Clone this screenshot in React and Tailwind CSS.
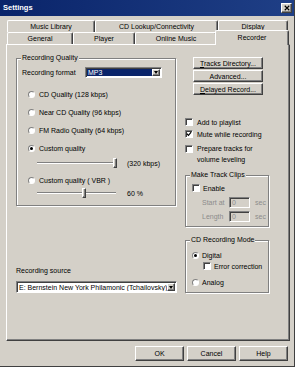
import React from "react";

const RAISED =
  "border border-t-white border-l-white border-r-[#404040] border-b-[#404040] shadow-[inset_-1px_-1px_0_#808080] bg-[#d4d0c8]";
const SUNKEN =
  "border border-t-[#808080] border-l-[#808080] border-r-white border-b-white shadow-[inset_1px_1px_0_#404040]";

function Btn({ className = "", children }) {
  return (
    <div className={`flex items-center justify-center ${RAISED} ${className}`}>
      {children}
    </div>
  );
}

function Arrow() {
  return (
    <div className={`flex h-full w-[8px] shrink-0 items-center justify-center ${RAISED}`}>
      <span className="h-0 w-0 border-l-[2.5px] border-r-[2.5px] border-t-[3px] border-l-transparent border-r-transparent border-t-black" />
    </div>
  );
}

function Radio({ checked }) {
  return (
    <span className="flex h-[7px] w-[7px] shrink-0 items-center justify-center rounded-full border border-t-[#808080] border-l-[#808080] border-r-white border-b-white bg-white">
      {checked && <span className="h-[3px] w-[3px] rounded-full bg-black" />}
    </span>
  );
}

function Check({ checked, className = "" }) {
  return (
    <span className={`flex h-[8px] w-[8px] shrink-0 items-center justify-center bg-white ${SUNKEN} ${className}`}>
      {checked && (
        <svg viewBox="0 0 7 7" className="h-[6px] w-[6px]">
          <path d="M1 3.2 L2.9 5.2 L6 1.4" stroke="black" strokeWidth="1.4" fill="none" />
        </svg>
      )}
    </span>
  );
}

function Slider({ thumb }) {
  return (
    <div className="relative h-[10px] w-[82px] shrink-0">
      <div className="absolute left-0 right-[3px] top-[4px] h-[2px] border-t border-b border-t-[#808080] border-b-white" />
      <div className={`absolute top-[0px] h-[10px] w-[4px] ${RAISED} ${thumb}`} />
    </div>
  );
}

function Group({ label, className = "", children }) {
  return (
    <div className={`flex flex-col border border-[#808080] shadow-[1px_1px_0_#fff,inset_1px_1px_0_#fff] ${className}`}>
      <span className="-mt-[5px] ml-[4px] h-[8px] self-start bg-[#d4d0c8] px-[1px] leading-[8px]">
        {label}
      </span>
      {children}
    </div>
  );
}

function Tab({ className = "", children }) {
  return (
    <div
      className={`flex items-center justify-center rounded-t-[2px] border-t border-l border-r border-t-white border-l-white border-r-[#404040] bg-[#d4d0c8] shadow-[inset_-1px_0_0_#808080] ${className}`}
    >
      {children}
    </div>
  );
}

export default function App() {
  return (
    <div className="flex h-[367px] w-[295px] flex-col overflow-hidden border-r border-b border-r-[#404040] border-b-[#404040] bg-[#d4d0c8] font-['Liberation_Sans',Arial,sans-serif] text-[7px] leading-none text-black">
      {/* title bar */}
      <div className="flex h-[16px] shrink-0 items-center justify-between bg-linear-to-r from-[#0a246a] to-[#1f3f86] pl-[3px] pr-[2px]">
        <span className="text-[7.5px] font-bold text-white">Settings</span>
        <Btn className="h-[10px] w-[11px]">
          <svg viewBox="0 0 8 8" className="h-[6px] w-[6px]">
            <path d="M1 1 L7 7 M7 1 L1 7" stroke="black" strokeWidth="1.5" />
          </svg>
        </Btn>
      </div>

      {/* tabs */}
      <div className="mt-[4px] flex shrink-0 flex-col pl-[7px]">
        <div className="flex h-[12px]">
          <Tab className="w-[88px]">Music Library</Tab>
          <Tab className="w-[123px]">CD Lookup/Connectivity</Tab>
          <Tab className="w-[70px]">Display</Tab>
        </div>
        <div className="flex h-[12px] items-end">
          <Tab className="h-[12px] w-[66px]">General</Tab>
          <Tab className="h-[12px] w-[62px]">Player</Tab>
          <Tab className="h-[12px] w-[82px]">Online Music</Tab>
          <Tab className="relative z-10 -mb-[1px] -ml-[2px] h-[15px] w-[74px] items-start pt-[3px]">
            Recorder
          </Tab>
        </div>
      </div>

      {/* panel */}
      <div className={`ml-[6px] flex h-[297px] w-[284px] shrink-0 ${RAISED}`}>
        {/* left column */}
        <div className="ml-[9px] mt-[13px] flex w-[160px] flex-col">
          <Group label="Recording Quality" className="pb-[7px]">
            <div className="mt-[5px] flex h-[11px] items-center pl-[5px]">
              <span className="w-[63px]">Recording format</span>
              <div className={`flex h-[11px] w-[77px] items-stretch bg-white ${SUNKEN} p-[1px]`}>
                <span className="flex flex-1 items-center bg-[#0a246a] pl-[1px] text-white">MP3</span>
                <Arrow />
              </div>
            </div>
            <div className="mt-[11px] flex h-[10px] items-center gap-[4px] pl-[11px]">
              <Radio />
              <span>CD Quality (128 kbps)</span>
            </div>
            <div className="mt-[8px] flex h-[10px] items-center gap-[4px] pl-[11px]">
              <Radio />
              <span>Near CD Quality (96 kbps)</span>
            </div>
            <div className="mt-[8px] flex h-[10px] items-center gap-[4px] pl-[11px]">
              <Radio />
              <span>FM Radio Quality (64 kbps)</span>
            </div>
            <div className="mt-[8px] flex h-[10px] items-center gap-[4px] pl-[11px]">
              <Radio checked />
              <span>Custom quality</span>
            </div>
            <div className="mt-[5px] flex h-[10px] items-center pl-[20px]">
              <Slider thumb="left-[76px]" />
              <span className="ml-[8px]">(320 kbps)</span>
            </div>
            <div className="mt-[7px] flex h-[10px] items-center gap-[4px] pl-[11px]">
              <Radio />
              <span>Custom quality ( VBR )</span>
            </div>
            <div className="mt-[3px] flex h-[10px] items-center pl-[20px]">
              <Slider thumb="left-[45px]" />
              <span className="ml-[8px]">60 %</span>
            </div>
          </Group>

          <span className="mt-[61px] h-[8px] leading-[8px]">Recording source</span>
          <div className={`mt-[6px] flex h-[12px] w-[161px] items-stretch bg-white ${SUNKEN} p-[1px]`}>
            <span className="flex min-w-0 flex-1 items-center overflow-hidden whitespace-nowrap pl-[1px]">
              E: Bernstein New York Philamonic (Tchailovsky)
            </span>
            <Arrow />
          </div>
        </div>

        {/* right column */}
        <div className="ml-[9px] mt-[12px] flex w-[84px] flex-col">
          <div className="ml-[8px] flex w-[70px] flex-col gap-[1px]">
            <Btn className="h-[12px]">
              <span>
                <span className="underline">T</span>racks Directory...
              </span>
            </Btn>
            <Btn className="h-[12px]">Advanced...</Btn>
            <Btn className="h-[12px]">
              <span>
                <span className="underline">D</span>elayed Record...
              </span>
            </Btn>
          </div>

          <div className="mt-[22px] flex h-[10px] items-center gap-[4px]">
            <Check />
            <span>Add to playlist</span>
          </div>
          <div className="mt-[2px] flex h-[10px] items-center gap-[4px]">
            <Check checked />
            <span>Mute while recording</span>
          </div>
          <div className="mt-[4px] flex items-start gap-[4px]">
            <Check className="mt-[2px]" />
            <span className="leading-[11px]">
              Prepare tracks for
              <br />
              volume leveling
            </span>
          </div>

          <Group label="Make Track Clips" className="mt-[10px] pb-[4px]">
            <div className="mt-[4px] flex h-[10px] items-center gap-[3px] pl-[6px]">
              <Check />
              <span>Enable</span>
            </div>
            <div className="mt-[4px] flex h-[11px] items-center pl-[16px] text-[#8c8c8c]">
              <span className="w-[27px]">Start at</span>
              <span className={`flex h-[11px] w-[21px] items-center pl-[2px] ${SUNKEN}`}>0</span>
              <span className="ml-[5px]">sec</span>
            </div>
            <div className="mt-[3px] flex h-[11px] items-center pl-[16px] text-[#8c8c8c]">
              <span className="w-[27px]">Length</span>
              <span className={`flex h-[11px] w-[21px] items-center pl-[2px] ${SUNKEN}`}>0</span>
              <span className="ml-[5px]">sec</span>
            </div>
          </Group>

          <Group label="CD Recording Mode" className="mt-[13px] pb-[5px]">
            <div className="mt-[6px] flex h-[10px] items-center gap-[3px] pl-[6px]">
              <Radio checked />
              <span>Digital</span>
            </div>
            <div className="mt-[1px] flex h-[10px] items-center gap-[3px] pl-[17px]">
              <Check />
              <span>Error correction</span>
            </div>
            <div className="mt-[6px] flex h-[10px] items-center gap-[3px] pl-[6px]">
              <Radio />
              <span>Analog</span>
            </div>
          </Group>
        </div>
      </div>

      {/* dialog buttons */}
      <div className="mt-[5px] flex h-[15px] shrink-0 justify-end gap-[3px] pr-[6px]">
        <Btn className="w-[49px]">OK</Btn>
        <Btn className="w-[49px]">Cancel</Btn>
        <Btn className="w-[49px]">Help</Btn>
      </div>
    </div>
  );
}
